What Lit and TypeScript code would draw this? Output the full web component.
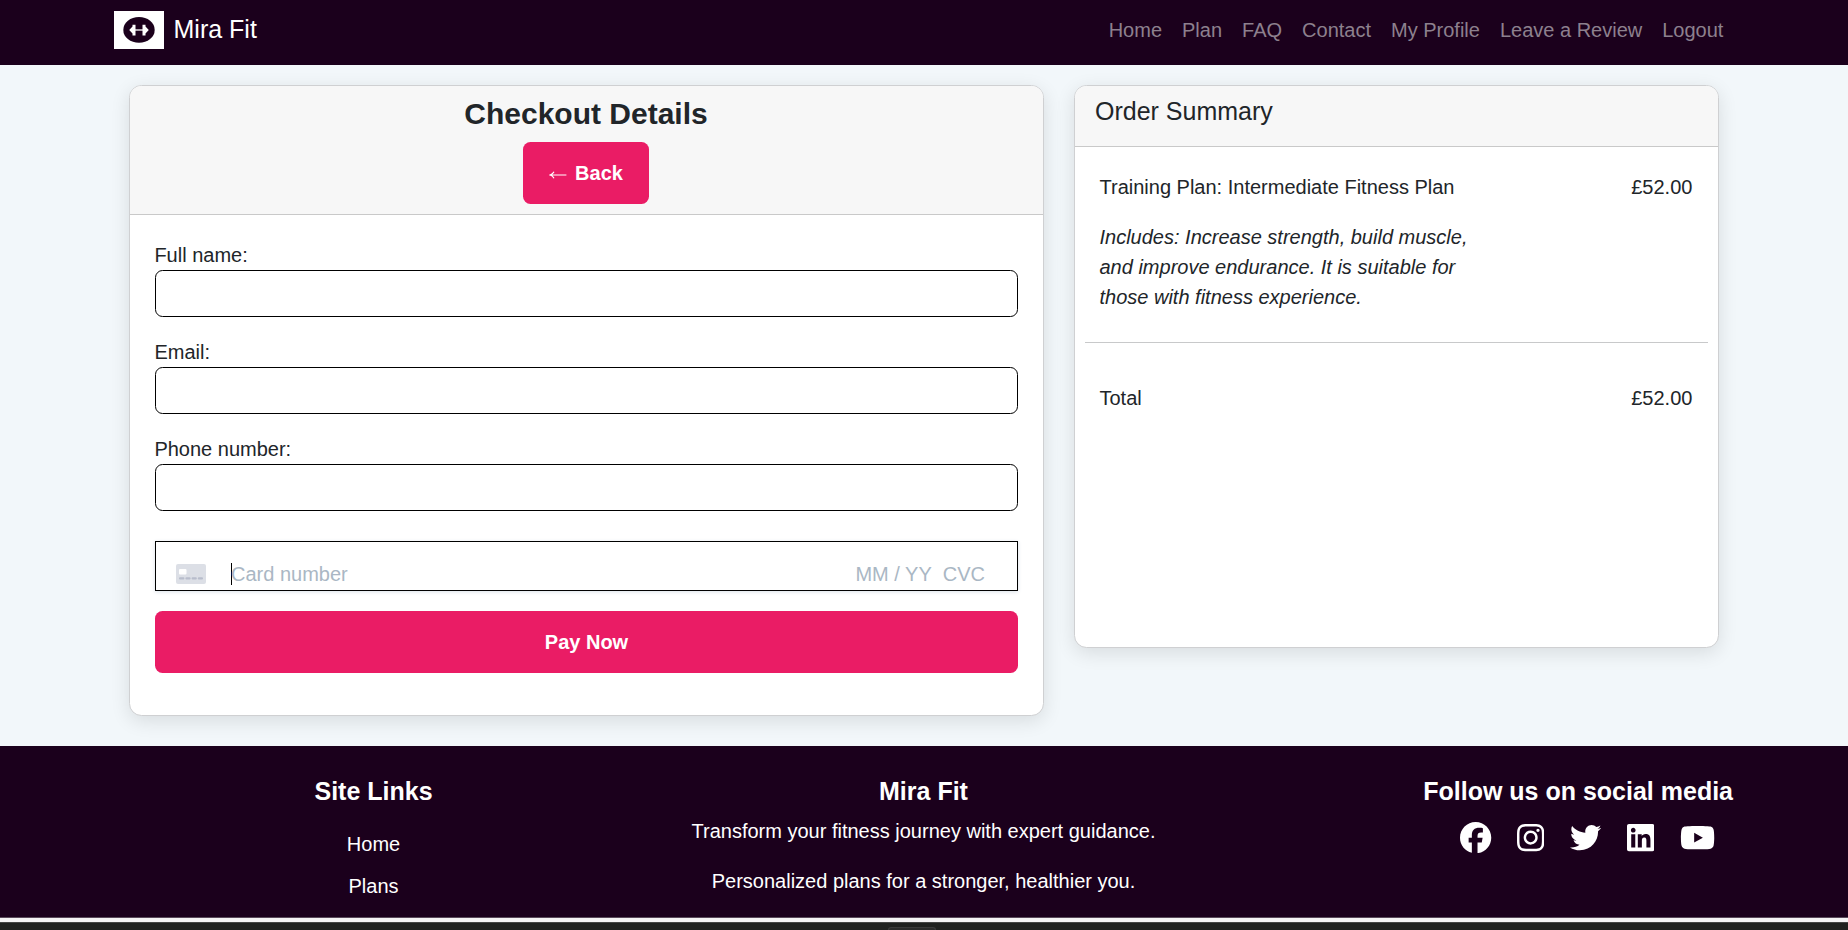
import { LitElement, html, css, svg } from "lit";
import { customElement } from "lit/decorators.js";

const NAV_LINKS = ["Home", "Plan", "FAQ", "Contact", "My Profile", "Leave a Review", "Logout"];
const FIELDS = ["Full name:", "Email:", "Phone number:"];

const SOCIAL = [
  {
    name: "Facebook",
    width: 512,
    path: "M512 256C512 114.6 397.4 0 256 0S0 114.6 0 256C0 376 82.7 476.8 194.2 504.5V334.2H141.4V256h52.8V222.3c0-87.1 39.4-127.5 125-127.5c16.2 0 44.2 3.2 55.7 6.4V172c-6-.6-16.5-1-29.6-1c-42 0-58.2 15.9-58.2 57.2V256h83.6l-14.4 78.2H287V510.1C413.8 494.8 512 386.9 512 256h0z",
  },
  {
    name: "Instagram",
    width: 448,
    path: "M224.1 141c-63.6 0-114.9 51.3-114.9 114.9s51.3 114.9 114.9 114.9S339 319.5 339 255.9 287.7 141 224.1 141zm0 189.6c-41.1 0-74.7-33.5-74.7-74.7s33.5-74.7 74.7-74.7 74.7 33.5 74.7 74.7-33.6 74.7-74.7 74.7zm146.4-194.3c0 14.9-12 26.8-26.8 26.8-14.9 0-26.8-12-26.8-26.8s12-26.8 26.8-26.8 26.8 12 26.8 26.8zm76.1 27.2c-1.7-35.9-9.9-67.7-36.2-93.9-26.2-26.2-58-34.4-93.9-36.2-37-2.1-147.9-2.1-184.9 0-35.8 1.7-67.6 9.9-93.9 36.1s-34.4 58-36.2 93.9c-2.1 37-2.1 147.9 0 184.9 1.7 35.9 9.9 67.7 36.2 93.9s58 34.4 93.9 36.2c37 2.1 147.9 2.1 184.9 0 35.9-1.7 67.7-9.9 93.9-36.2 26.2-26.2 34.4-58 36.2-93.9 2.1-37 2.1-147.8 0-184.8zM398.8 388c-7.8 19.6-22.9 34.7-42.6 42.6-29.5 11.7-99.5 9-132.1 9s-102.7 2.6-132.1-9c-19.6-7.8-34.7-22.9-42.6-42.6-11.7-29.5-9-99.5-9-132.1s-2.6-102.7 9-132.1c7.8-19.6 22.9-34.7 42.6-42.6 29.5-11.7 99.5-9 132.1-9s102.7-2.6 132.1 9c19.6 7.8 34.7 22.9 42.6 42.6 11.7 29.5 9 99.5 9 132.1s2.7 102.7-9 132.1z",
  },
  {
    name: "Twitter",
    width: 512,
    path: "M459.37 151.716c.325 4.548.325 9.097.325 13.645 0 138.72-105.583 298.558-298.558 298.558-59.452 0-114.68-17.219-161.137-47.106 8.447.974 16.568 1.299 25.34 1.299 49.055 0 94.213-16.568 130.274-44.832-46.132-.975-84.792-31.188-98.112-72.772 6.498.974 12.995 1.624 19.818 1.624 9.421 0 18.843-1.3 27.614-3.573-48.081-9.747-84.143-51.98-84.143-102.985v-1.299c13.969 7.797 30.214 12.67 47.431 13.319-28.264-18.843-46.781-51.005-46.781-87.391 0-19.492 5.197-37.36 14.294-52.954 51.655 63.675 129.3 105.258 216.365 109.807-1.624-7.797-2.599-15.918-2.599-24.04 0-57.828 46.782-104.934 104.934-104.934 30.213 0 57.502 12.67 76.67 33.137 23.715-4.548 46.456-13.32 66.599-25.34-7.798 24.366-24.366 44.833-46.132 57.827 21.117-2.273 41.584-8.122 60.426-16.243-14.292 20.791-32.161 39.308-52.628 54.253z",
  },
  {
    name: "LinkedIn",
    width: 448,
    path: "M416 32H31.9C14.3 32 0 46.5 0 64.3v383.4C0 465.5 14.3 480 31.9 480H416c17.6 0 32-14.5 32-32.3V64.3c0-17.8-14.4-32.3-32-32.3zM135.4 416H69V202.2h66.5V416zm-33.2-243c-21.3 0-38.5-17.3-38.5-38.5S80.9 96 102.2 96c21.2 0 38.5 17.3 38.5 38.5 0 21.3-17.2 38.5-38.5 38.5zm282.1 243h-66.4V312c0-24.8-.5-56.7-34.5-56.7-34.6 0-39.9 27-39.9 54.9V416h-66.4V202.2h63.7v29.2h.9c8.9-16.8 30.6-34.5 62.9-34.5 67.2 0 79.7 44.3 79.7 101.9V416z",
  },
  {
    name: "YouTube",
    width: 576,
    path: "M549.655 124.083c-6.281-23.65-24.787-42.276-48.284-48.597C458.781 64 288 64 288 64S117.22 64 74.629 75.486c-23.497 6.322-42.003 24.947-48.284 48.597-11.412 42.867-11.412 132.305-11.412 132.305s0 89.438 11.412 132.305c6.281 23.65 24.787 41.5 48.284 47.821C117.22 448 288 448 288 448s170.78 0 213.371-11.486c23.497-6.321 42.003-24.171 48.284-47.821 11.412-42.867 11.412-132.305 11.412-132.305s0-89.438-11.412-132.305zm-317.51 213.508V175.185l142.739 81.205-142.739 81.201z",
  },
];

@customElement("app-root")
export class AppRoot extends LitElement {
  static styles = css`
    :host {
      display: flex;
      flex-direction: column;
      height: 930px;
      overflow: hidden;
      background: #f2f7fa;
      color: #212529;
      font: 20px/30px "Liberation Sans", Arial, sans-serif;
    }
    * { box-sizing: border-box; }
    h2, h5, p { margin: 0; }
    .navbar {
      flex: none;
      height: 65px;
      background: #1b001c;
    }
    .container {
      width: 1620px;
      margin: 0 auto;
      display: flex;
      justify-content: space-between;
    }
    .brand {
      display: flex;
      align-items: flex-start;
      gap: 9.5px;
      padding-top: 11px;
      color: #fff;
      font-size: 25px;
      line-height: 38px;
    }
    .brand-name { margin-top: -1px; }
    .logo { display: block; width: 50px; height: 38px; }
    .links {
      display: flex;
      gap: 20px;
      padding: 15px 10.6px 0 0;
      color: #8d808e;
    }
    .main {
      flex: none;
      display: flex;
      align-items: flex-start;
      gap: 30px;
      width: 1590px;
      height: 681px;
      margin: 0 auto;
      padding-top: 20px;
    }
    .card {
      background: #fff;
      border: 1px solid #cfd0d2;
      border-radius: 12.5px;
      box-shadow: 0 5px 19px rgba(0, 0, 0, 0.11);
      overflow: hidden;
    }
    .checkout { width: 915px; height: 631px; }
    .summary { width: 645px; height: 563px; }
    .head {
      background: #f7f7f7;
      border-bottom: 1px solid #c9c9c9;
      padding: 10px 20px;
    }
    .head-center {
      display: flex;
      flex-direction: column;
      align-items: center;
      gap: 10px;
      padding-right: 21px;
    }
    h2 { font-size: 30px; line-height: 36px; font-weight: 700; }
    .order-title { font-size: 25px; font-weight: 400; margin-bottom: 10px; }
    .btn {
      display: flex;
      align-items: center;
      justify-content: center;
      height: 62px;
      padding: 0 26px;
      border: 0;
      border-radius: 7.5px;
      background: #ea1c65;
      color: #fff;
      font: 700 20px/30px "Liberation Sans", Arial, sans-serif;
    }
    .arrow { width: 20px; height: 12px; margin: 3px 6px 0 0; }
    .form { display: flex; flex-direction: column; padding: 25px; }
    .field { display: flex; flex-direction: column; margin-bottom: 20px; }
    .label { margin-left: -0.6px; }
    .input {
      height: 47px;
      border: 1px solid #000;
      border-radius: 7.5px;
      background: #fff;
    }
    .card-element {
      display: flex;
      align-items: center;
      height: 50px;
      margin: 10px 0 20px;
      padding: 15px 32px 0 20px;
      border: 1px solid #000;
      box-shadow: 0 1px 4px #dbe2e9;
      color: #aab7c4;
      line-height: 22px;
    }
    .card-icon { width: 30px; height: 20px; margin-right: 25px; }
    .caret { width: 1px; height: 22px; margin-right: -1px; background: #000; }
    .number { flex: 1; padding-top: 1px; }
    .expiry { margin-right: 11px; padding-top: 1px; }
    .cvc { padding-top: 1px; }
    .rows { padding: 25px 10px 0; }
    .row {
      display: flex;
      justify-content: space-between;
      padding: 0 15.6px 0 14.5px;
    }
    .includes {
      width: 400px;
      margin: 20px 0 30px;
      padding-left: 14.5px;
      font-style: italic;
    }
    .rule { height: 1px; margin-bottom: 40px; background: #c8c9ca; }
    .footer {
      flex: none;
      height: 171px;
      padding-top: 30px;
      background: #1b001c;
      color: #fff;
      display: flex;
      justify-content: center;
    }
    .col {
      width: 550px;
      padding: 0 16px 0 15px;
      display: flex;
      flex-direction: column;
      align-items: center;
    }
    .col-right { align-items: flex-end; }
    h5 { font-size: 25px; line-height: 30px; font-weight: 700; }
    .site-links {
      display: flex;
      flex-direction: column;
      align-items: center;
      gap: 12px;
      margin-top: 23px;
    }
    .tag { margin-top: 10px; }
    .tag + .tag { margin-top: 20px; }
    .social { display: flex; gap: 25.6px; margin: 15.6px 18px 0 0; }
    .social svg { display: block; height: 31.25px; fill: #fff; }
    .edge {
      flex: none;
      height: 5px;
      background: #f5f3f5;
      border-top: 1px solid #5a4a5b;
    }
    .taskbar {
      flex: none;
      height: 8px;
      display: flex;
      justify-content: center;
      align-items: flex-end;
      padding-right: 24px;
      background: #202120;
      border-top: 1px solid #454545;
    }
    .pill {
      width: 48px;
      height: 3px;
      border: 1px solid #3a3a3a;
      border-bottom: 0;
      border-radius: 4px 4px 0 0;
      background: #2b2b2b;
    }
  `;

  private logo() {
    return html`<svg class="logo" viewBox="0 0 50 38">
      <rect width="50" height="38" fill="#fff" />
      <ellipse cx="25" cy="18.9" rx="15.7" ry="12.9" fill="#1b001c" />
      <g fill="#fff">
        <path d="M15.2 19l3.3-3.6V13.8h3v10.6h-3v-1.8z" />
        <path d="M34.8 19l-3.3-3.6V13.8h-3v10.6h3v-1.8z" />
        <rect x="21" y="18.2" width="8" height="1.6" opacity=".8" />
      </g>
    </svg>`;
  }

  private cardIcon() {
    return html`<svg class="card-icon" viewBox="0 0 30 20">
      <rect width="30" height="20" rx="2" fill="#dcdfe6" />
      <rect x="3" y="5" width="7.5" height="5.5" rx="1" fill="#fff" />
      <g fill="#b8bdcc">
        <rect x="3" y="13.2" width="5.4" height="2.4" rx="1" />
        <rect x="9.4" y="13.2" width="5.2" height="2.4" rx="1" />
        <rect x="15.6" y="13.2" width="5.2" height="2.4" rx="1" />
        <rect x="21.8" y="13.2" width="5.2" height="2.4" rx="1" />
      </g>
    </svg>`;
  }

  render() {
    return html`
      <nav class="navbar">
        <div class="container">
          <div class="brand">${this.logo()}<span class="brand-name">Mira Fit</span></div>
          <div class="links">${NAV_LINKS.map((l) => html`<span>${l}</span>`)}</div>
        </div>
      </nav>
      <main class="main">
        <section class="card checkout">
          <div class="head head-center">
            <h2>Checkout Details</h2>
            <button class="btn">
              <svg class="arrow" viewBox="0 0 20 12" fill="none" stroke="#fff" stroke-width="1.2">
                <path d="M1 6H17.4M5 2.8Q3.8 5.2 1 6Q3.8 6.8 5 9.2" />
              </svg>Back
            </button>
          </div>
          <div class="form">
            ${FIELDS.map((f) => html`<div class="field"><span class="label">${f}</span><div class="input"></div></div>`)}
            <div class="card-element">
              ${this.cardIcon()}<span class="caret"></span>
              <span class="number">Card number</span>
              <span class="expiry">MM / YY</span>
              <span class="cvc">CVC</span>
            </div>
            <button class="btn">Pay Now</button>
          </div>
        </section>
        <section class="card summary">
          <div class="head"><p class="order-title">Order Summary</p></div>
          <div class="rows">
            <div class="row"><span>Training Plan: Intermediate Fitness Plan</span><span>£52.00</span></div>
            <p class="includes">
              Includes: Increase strength, build muscle, and improve endurance. It is suitable for those with fitness experience.
            </p>
            <div class="rule"></div>
            <div class="row"><span>Total</span><span>£52.00</span></div>
          </div>
        </section>
      </main>
      <footer class="footer">
        <div class="col">
          <h5>Site Links</h5>
          <div class="site-links"><span>Home</span><span>Plans</span></div>
        </div>
        <div class="col">
          <h5>Mira Fit</h5>
          <p class="tag">Transform your fitness journey with expert guidance.</p>
          <p class="tag">Personalized plans for a stronger, healthier you.</p>
        </div>
        <div class="col col-right">
          <h5>Follow us on social media</h5>
          <div class="social">
            ${SOCIAL.map(
              (s) => html`<svg viewBox="0 0 ${s.width} 512" aria-label=${s.name}>${svg`<path d=${s.path} />`}</svg>`
            )}
          </div>
        </div>
      </footer>
      <div class="edge"></div>
      <div class="taskbar"><div class="pill"></div></div>
    `;
  }
}
